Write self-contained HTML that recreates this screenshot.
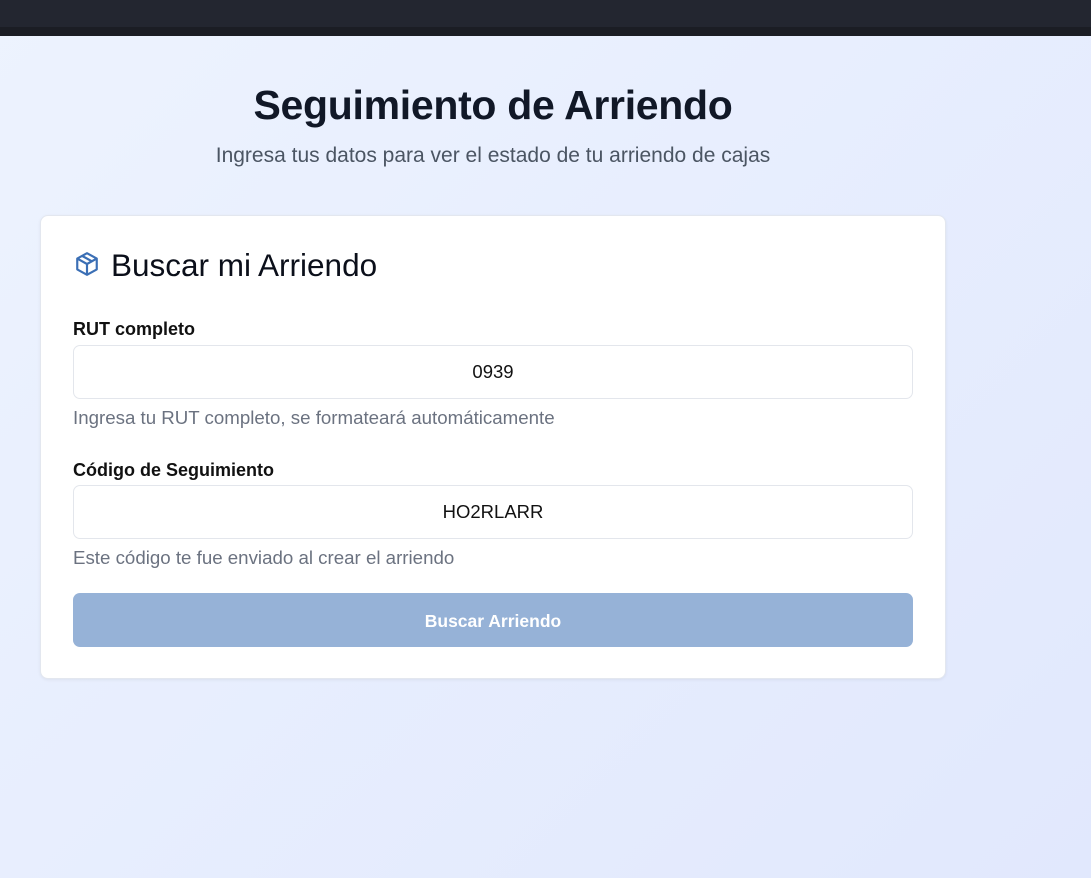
<!DOCTYPE html>
<html><head><meta charset="utf-8"><style>
*{box-sizing:border-box;margin:0;padding:0}
body{width:1091px;height:878px;overflow:hidden;font-family:"Liberation Sans","DejaVu Sans",sans-serif;background:linear-gradient(135deg,#edf3fe 0%,#e1e8fd 100%);position:relative}
.top{position:absolute;left:0;top:0;width:1091px;height:27px;background:#232630}
.top2{position:absolute;left:0;top:27px;width:1091px;height:9px;background:#1b1d24}
h1{position:absolute;left:0;width:986px;top:82px;text-align:center;font-size:41px;font-weight:bold;color:#111827;letter-spacing:-0.3px}
.sub{position:absolute;left:0;width:986px;top:144px;text-align:center;font-size:21px;color:#4b5563}
.card{position:absolute;left:40px;top:215px;width:906px;height:464px;background:#fff;border-radius:8px;border:1px solid #e3e7ef;box-shadow:0 1px 3px rgba(0,0,0,.06)}
.title{position:absolute;top:247px;font-size:31.5px;color:#0b0f1a}
.icon{position:absolute;left:74px;top:251px}
.lbl{position:absolute;left:73px;font-size:18px;font-weight:bold;color:#111}
.inp{position:absolute;left:73px;width:840px;height:54px;border:1px solid #e3e6ec;border-radius:7px;text-align:center;line-height:52px;font-size:18.5px;color:#111}
.hint{position:absolute;left:73px;font-size:18.7px;color:#6b7280}
.btn{position:absolute;left:73px;top:593px;width:840px;height:54px;border-radius:7px;background:#96b2d7;color:#fff;font-weight:bold;font-size:17.5px;text-align:center;line-height:56px}
</style></head><body>
<div class="top"></div><div class="top2"></div>
<h1>Seguimiento de Arriendo</h1>
<div class="sub">Ingresa tus datos para ver el estado de tu arriendo de cajas</div>
<div class="card"></div>
<svg class="icon" width="26" height="26" viewBox="0 0 24 24" fill="none" stroke="#3b6fb5" stroke-width="2" stroke-linejoin="round"><path d="M12 2 21 7v10l-9 5-9-5V7z"/><path d="M3 7l9 5 9-5M12 12v10M7.5 4.5l9 5"/></svg>
<div class="title" style="left:111px">Buscar mi Arriendo</div>
<div class="lbl" style="top:319px">RUT completo</div>
<div class="inp" style="top:345px">0939</div>
<div class="hint" style="top:407px">Ingresa tu RUT completo, se formateará automáticamente</div>
<div class="lbl" style="top:460px">Código de Seguimiento</div>
<div class="inp" style="top:485px">HO2RLARR</div>
<div class="hint" style="top:547px">Este código te fue enviado al crear el arriendo</div>
<div class="btn">Buscar Arriendo</div>
</body></html>
